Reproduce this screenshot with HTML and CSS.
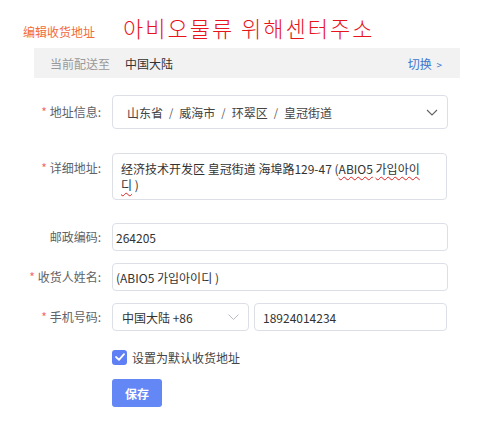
FILE: index.html
```html
<!DOCTYPE html>
<html lang="zh">
<head>
<meta charset="utf-8">
<title>编辑收货地址</title>
<link rel="stylesheet" href="styles.css">
</head>
<body>
<div class="page">
  <div class="header">
    <span class="title">编辑收货地址</span>
    <span class="notice">아비오물류 위해센터주소</span>
  </div>
  <div class="ship-bar">
    <span class="ship-label">当前配送至</span>
    <span class="ship-region">中国大陆</span>
    <span class="ship-switch">切换 <span class="gt">&gt;</span></span>
  </div>
  <div class="form">
    <div class="row row-area">
      <div class="label"><span class="req">*</span> 地址信息:</div>
      <div class="control select-area">
        <span>山东省</span><span class="sep">/</span><span>威海市</span><span class="sep">/</span><span>环翠区</span><span class="sep">/</span><span>皇冠街道</span>
        <svg class="chev" width="12" height="7" viewBox="0 0 12 7"><path d="M1 1 L6 6 L11 1" fill="none" stroke="#606266" stroke-width="1.1"/></svg>
      </div>
    </div>

    <div class="row row-top row-detail">
      <div class="label label-top"><span class="req">*</span> 详细地址:</div>
      <div class="control textarea">经济技术开发区 皇冠街道 海埠路129-47 (<span class="spell">ABIO5</span> <span class="spell">가입아이</span><br><span class="spell">디</span> )</div>
    </div>

    <div class="row">
      <div class="label">邮政编码:</div>
      <div class="control input">264205</div>
    </div>

    <div class="row">
      <div class="label"><span class="req">*</span> 收货人姓名:</div>
      <div class="control input">(ABIO5 가입아이디 )</div>
    </div>

    <div class="row">
      <div class="label"><span class="req">*</span> 手机号码:</div>
      <div class="phone">
        <div class="control phone-code">中国大陆 +86
          <svg class="chev" width="11" height="6" viewBox="0 0 11 6"><path d="M0.5 0.5 L5.5 5.5 L10.5 0.5" fill="none" stroke="#b8bcc4" stroke-width="1"/></svg>
        </div>
        <div class="control phone-num">18924014234</div>
      </div>
    </div>

    <div class="row row-check">
      <div class="label"></div>
      <div class="check-row">
        <span class="checkbox"><svg width="10" height="8" viewBox="0 0 10 8"><path d="M1 4 L4 6.8 L9 1.2" fill="none" stroke="#fff" stroke-width="1.8" stroke-linecap="round" stroke-linejoin="round"/></svg></span>
        <span class="check-text">设置为默认收货地址</span>
      </div>
    </div>

    <div class="row row-btn">
      <div class="label"></div>
      <button class="save">保存</button>
    </div>
  </div>
</div>
</body>
</html>
```

FILE: styles.css
```css
html, body {
  margin: 0;
  padding: 0;
  background: #fff;
}
body {
  font-family: "Noto Sans CJK SC", "Microsoft YaHei", "Noto Sans", sans-serif;
  font-size: 12px;
  color: #333;
}
.page {
  width: 488px;
}
.header {
  height: 48px;
  box-sizing: border-box;
  padding: 15px 0 0 23px;
  display: flex;
  align-items: baseline;
}
.title {
  color: #f26b3a;
  font-size: 12px;
  width: 100px;
}
.notice {
  color: #e8141c;
  font-family: "Noto Sans CJK KR", sans-serif;
  font-weight: 300;
  font-size: 22px;
  line-height: 24px;
  letter-spacing: 2px;
}
.ship-bar {
  margin-left: 34px;
  width: 426px;
  height: 30px;
  background: #f2f2f2;
  display: flex;
  align-items: center;
  box-sizing: border-box;
  padding: 0 18px 0 16px;
}
.ship-label {
  color: #999;
  width: 75px;
}
.ship-region {
  color: #333;
  flex: 1;
}
.ship-switch {
  color: #3c76d0;
}
.gt {
  font-size: 10px;
  margin-left: 2px;
}
.form {
  padding-top: 17px;
  display: flex;
  flex-direction: column;
}
.row {
  display: flex;
  align-items: center;
  gap: 11px;
  margin-bottom: 12px;
}
.row-area {
  margin-bottom: 24px;
}
.row-detail {
  margin-bottom: 23px;
}
.row-top {
  align-items: flex-start;
}
.row-check {
  margin-top: 6px;
  margin-bottom: 14px;
}
.label {
  width: 101px;
  flex: none;
  text-align: right;
  color: #606266;
  font-size: 12px;
  line-height: 16px;
}
.label-top {
  padding-top: 7px;
}
.req {
  color: #f56c6c;
}
.control {
  box-sizing: border-box;
  border: 1px solid #dcdfe6;
  border-radius: 4px;
  background: #fff;
  color: #333;
}
.select-area {
  width: 336px;
  height: 34px;
  display: flex;
  align-items: center;
  padding: 0 9px 0 14px;
  color: #444;
}
.select-area .sep {
  margin: 0 6px;
  font-size: 11px;
  color: #555;
}
.select-area .chev {
  margin-left: auto;
}
.textarea {
  width: 335px;
  height: 47px;
  padding: 7px 8px;
  line-height: 16px;
}
.spell {
  text-decoration: underline wavy #e02020;
  text-decoration-thickness: 1px;
  text-underline-offset: 2px;
}
.input {
  width: 336px;
  height: 28px;
  display: flex;
  align-items: center;
  padding-left: 3px;
}
.phone {
  display: flex;
  gap: 5px;
}
.phone-code {
  width: 137px;
  height: 28px;
  display: flex;
  align-items: center;
  padding: 0 9px 0 9px;
}
.phone-code .chev {
  margin-left: auto;
}
.phone-num {
  width: 193px;
  height: 28px;
  display: flex;
  align-items: center;
  padding-left: 8px;
}
.check-row {
  display: flex;
  align-items: center;
  height: 16px;
}
.checkbox {
  width: 15px;
  height: 15px;
  border-radius: 3px;
  background: #5f80f5;
  display: flex;
  align-items: center;
  justify-content: center;
}
.check-text {
  margin-left: 5px;
  color: #444;
  font-size: 12px;
}
.save {
  width: 50px;
  height: 28px;
  border: none;
  border-radius: 3px;
  background: #6487f6;
  color: #fff;
  font-family: "Noto Sans CJK SC", sans-serif;
  font-size: 12px;
  font-weight: bold;
  padding: 0;
}
```
